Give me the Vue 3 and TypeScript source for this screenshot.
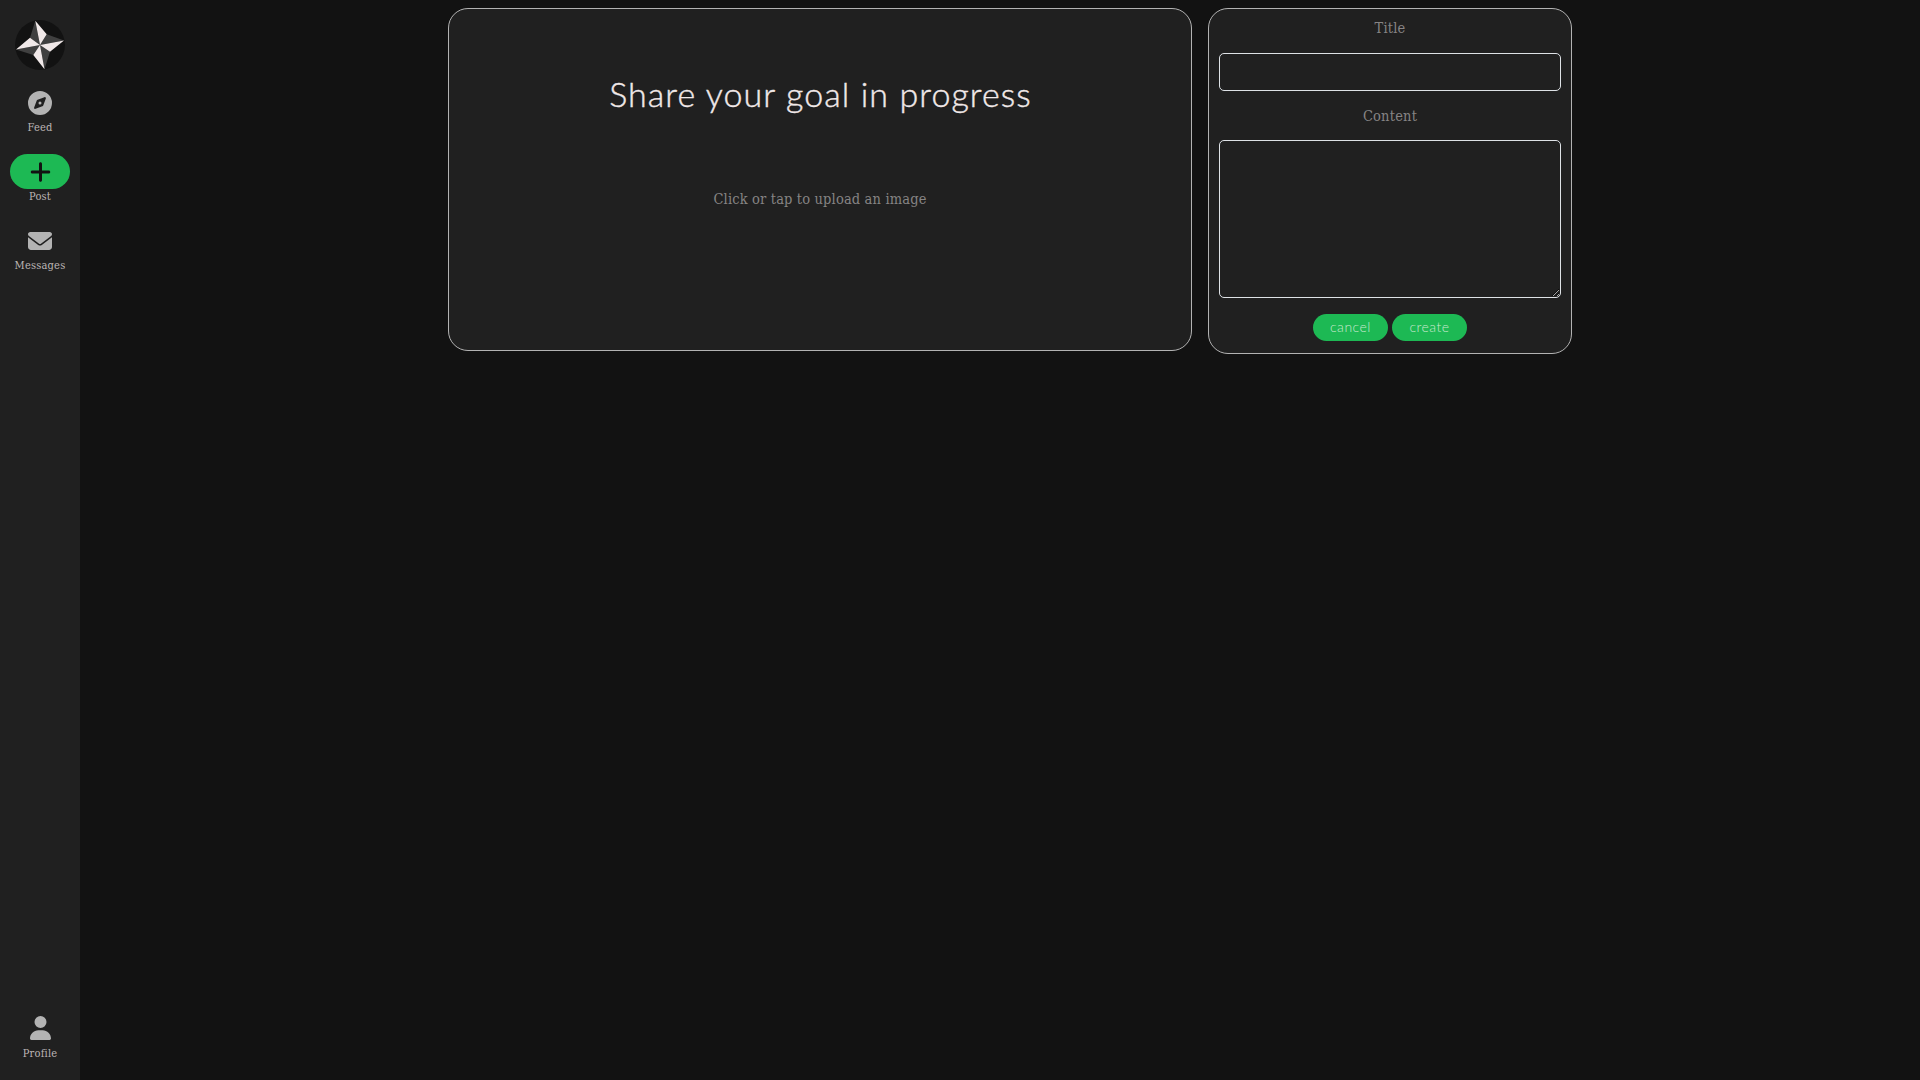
<script setup lang="ts">
interface NavItem {
  label: string
  box: string
  path: string
  width: number
  height: number
  active?: boolean
}

const items: NavItem[] = [
  {
    label: 'Feed',
    box: '0 0 512 512',
    width: 24,
    height: 24,
    path: 'M256 512A256 256 0 1 0 256 0a256 256 0 1 0 0 512zm50.700-186.900L162.400 380.600c-19.400 7.500-38.500-11.600-31-31l55.500-144.300c3.300-8.500 9.900-15.100 18.400-18.400l144.300-55.500c19.400-7.500 38.500 11.600 31 31L325.100 306.700c-3.200 8.500-9.900 15.100-18.400 18.400zM288 256a32 32 0 1 0-64 0 32 32 0 1 0 64 0z',
  },
  {
    label: 'Post',
    box: '0 0 448 512',
    width: 21,
    height: 24,
    active: true,
    path: 'M256 80c0-17.700-14.300-32-32-32s-32 14.300-32 32V224H48c-17.700 0-32 14.300-32 32s14.300 32 32 32H192V432c0 17.700 14.300 32 32 32s32-14.300 32-32V288H400c17.700 0 32-14.300 32-32s-14.300-32-32-32H256V80z',
  },
  {
    label: 'Messages',
    box: '0 0 512 512',
    width: 24,
    height: 24,
    path: 'M48 64C21.500 64 0 85.500 0 112c0 15.100 7.100 29.300 19.200 38.400L236.800 313.600c11.400 8.500 27 8.500 38.400 0L492.800 150.400c12.100-9.100 19.200-23.300 19.200-38.400c0-26.500-21.500-48-48-48H48zM0 176V384c0 35.300 28.700 64 64 64H448c35.300 0 64-28.700 64-64V176L294.400 339.200c-22.800 17.100-54 17.100-76.800 0L0 176z',
  },
]

const profile: NavItem = {
  label: 'Profile',
  box: '0 0 448 512',
  width: 21,
  height: 24,
  path: 'M224 256A128 128 0 1 0 224 0a128 128 0 1 0 0 256zm-45.700 48C79.800 304 0 383.800 0 482.300C0 498.700 13.300 512 29.700 512H418.300c16.400 0 29.700-13.300 29.700-29.700C448 383.800 368.200 304 269.700 304H178.300z',
}
</script>

<template>
  <div class="app">
    <nav class="sidebar">
      <svg class="logo" viewBox="15 20 50 50">
        <circle cx="40" cy="45" r="25" fill="#121212" />
        <path fill="#404040" d="M35.300 20.700 30 37.700 40 45ZM64 40.500 46.700 34.300 40 45ZM44.500 69.200 50 51.700 40 45ZM16 49.500 33.300 55 40 45Z" />
        <path fill="#f1e9e9" d="M35.300 20.700 46.700 34.300 40 45ZM64 40.500 50 51.700 40 45ZM44.500 69.200 33.300 55 40 45ZM16 49.500 30 37.700 40 45Z" />
      </svg>
      <a v-for="item in items" :key="item.label" class="item" :class="{ active: item.active }">
        <span class="pill">
          <svg :viewBox="item.box" :width="item.width" :height="item.height"><path :d="item.path" /></svg>
        </span>
        <span class="label">{{ item.label }}</span>
      </a>
      <a class="item profile">
        <span class="pill">
          <svg :viewBox="profile.box" :width="profile.width" :height="profile.height"><path :d="profile.path" /></svg>
        </span>
        <span class="label">{{ profile.label }}</span>
      </a>
    </nav>
    <main class="content">
      <section class="card upload">
        <h1>Share your goal in progress</h1>
        <p>Click or tap to upload an image</p>
      </section>
      <form class="card details" @submit.prevent>
        <label class="first" for="title">Title</label>
        <input id="title" type="text" />
        <label class="second" for="content">Content</label>
        <textarea id="content"></textarea>
        <div class="actions">
          <button type="button">cancel</button>
          <button type="button">create</button>
        </div>
      </form>
    </main>
  </div>
</template>

<style>
body {
  margin: 0;
  background: #121212;
}
</style>

<style scoped>
* {
  box-sizing: border-box;
}
.app {
  display: flex;
  height: 100vh;
  background: #121212;
  overflow: hidden;
  font-family: "DejaVu Serif Condensed", "DejaVu Serif", serif;
}
.sidebar {
  width: 80px;
  display: flex;
  flex-direction: column;
  align-items: center;
  padding: 20px 0 19px;
  background: #202020;
}
.logo {
  width: 50px;
  height: 50px;
  margin-bottom: 15px;
  flex: none;
}
.item {
  display: flex;
  flex-direction: column;
  align-items: center;
  height: 69px;
  flex: none;
  color: #bdb6b6;
}
.pill {
  width: 60px;
  height: 35px;
  display: flex;
  align-items: center;
  justify-content: center;
  border-radius: 18px;
}
.pill svg {
  display: block;
  fill: #b3b3b3;
}
.active .pill {
  background: #1db954;
}
.active svg {
  fill: #121212;
}
.label {
  font-size: 11px;
  line-height: 15px;
  letter-spacing: 0.2px;
}
.profile {
  height: 51px;
  margin-top: auto;
}
.profile .label {
  margin-top: 1px;
}
.content {
  flex: 1;
  display: flex;
  justify-content: center;
  align-items: flex-start;
  gap: 16px;
  padding: 8px 0 0 20px;
}
.card {
  background: #202020;
  border: 1px solid #b3b3b3;
  border-radius: 20px;
}
.upload {
  width: 744px;
  height: 343px;
  text-align: center;
}
h1 {
  margin: 61px 0 0;
  padding-left: 1px;
  font: 300 34px/48px Lato, sans-serif;
  letter-spacing: 1.08px;
  color: #f1e9e9;
  -webkit-text-stroke: 0.4px #f1e9e9;
}
p {
  margin: 70px 0 0;
  font-size: 14.5px;
  line-height: 22px;
  letter-spacing: 0.15px;
  color: #868484;
}
.details {
  width: 364px;
  height: 346px;
  padding: 8px 10px 0;
  display: flex;
  flex-direction: column;
  align-items: center;
}
label {
  font-size: 14.5px;
  line-height: 22px;
  letter-spacing: 0.2px;
  color: #868484;
}
.second {
  margin-top: 14px;
}
input,
textarea {
  display: block;
  width: 342px;
  height: 38px;
  margin: 14px 0 0;
  background: #202020;
  border: 1px solid #dee2e6;
  border-radius: 5px;
  color: #f1e9e9;
  flex: none;
}
textarea {
  height: 158px;
  margin-top: 13px;
}
.actions {
  display: flex;
  gap: 4px;
  margin-top: 16px;
}
button {
  width: 75px;
  height: 27px;
  padding: 0 0 1px;
  border: 0;
  border-radius: 14px;
  background: #1db954;
  color: #c8e8cd;
  font: 300 14px/24px Lato, sans-serif;
  letter-spacing: 0.5px;
}
</style>
